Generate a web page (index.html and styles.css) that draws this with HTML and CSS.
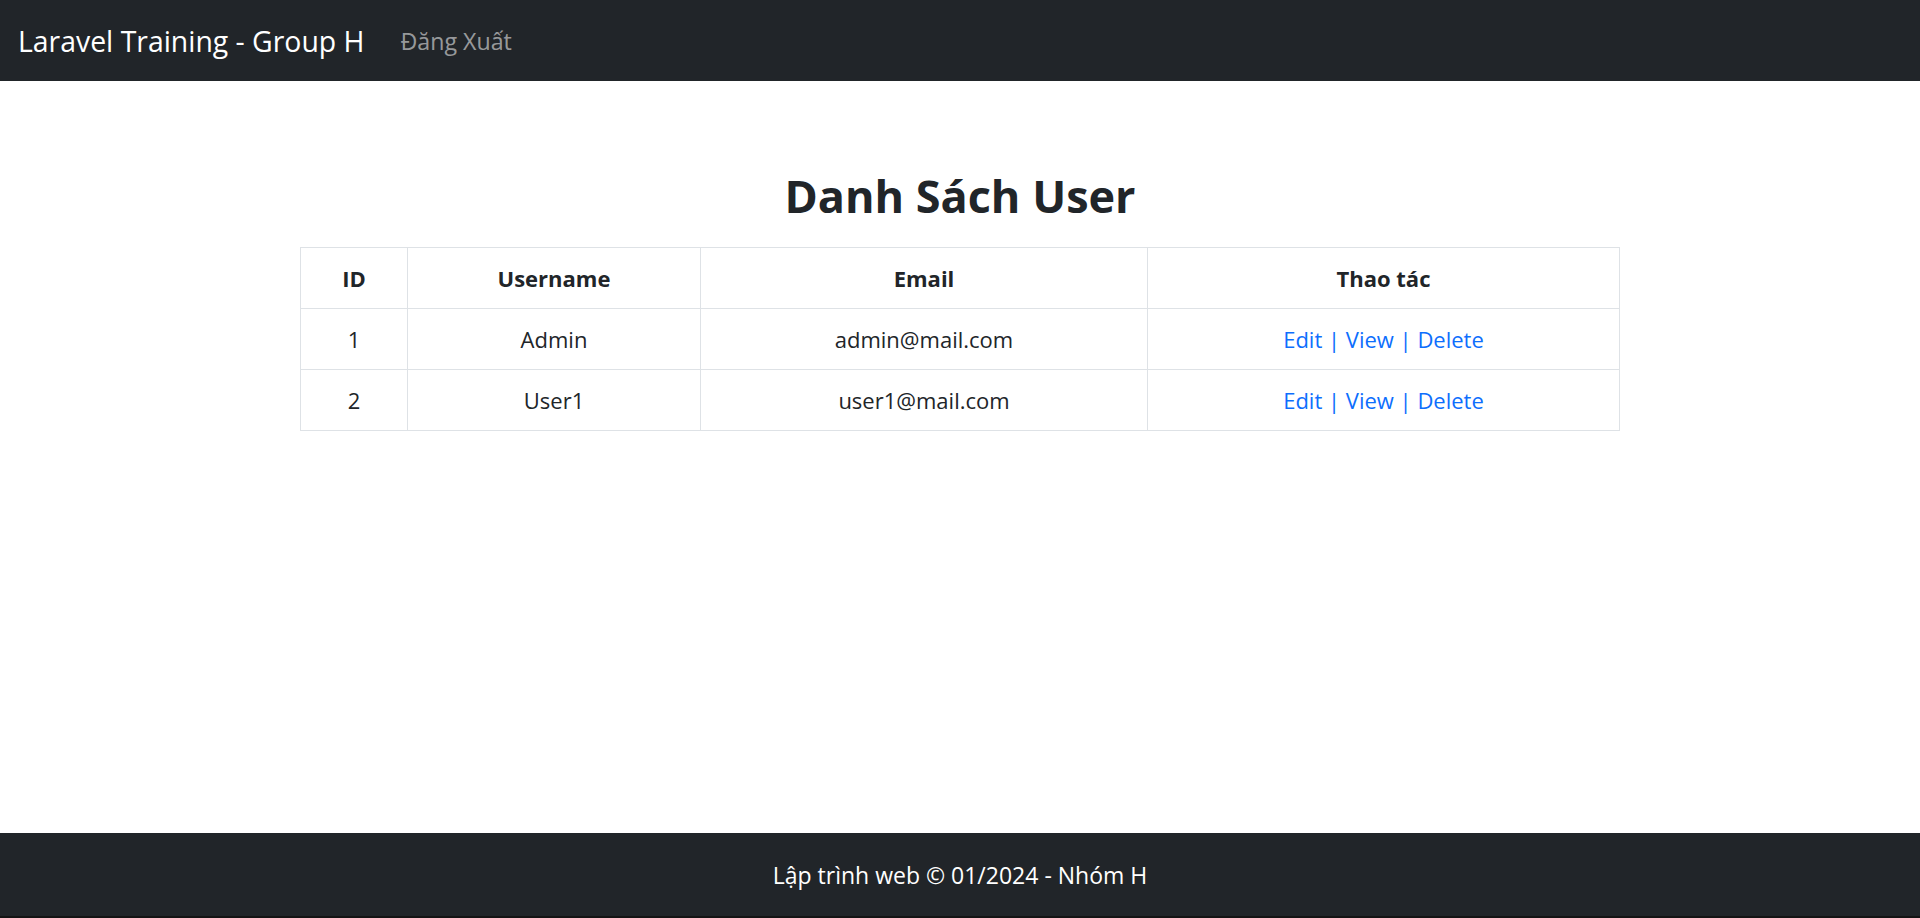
FILE: index.html
```html
<!DOCTYPE html>
<html lang="vi">
<head>
<meta charset="utf-8">
<title>Danh Sách User</title>
<link rel="stylesheet" href="styles.css">
</head>
<body>
<nav class="navbar">
  <a class="brand" href="#">Laravel Training - Group H</a>
  <a class="nav-link" href="#">Đăng Xuất</a>
</nav>
<main class="content">
  <h1 class="title">Danh Sách User</h1>
  <table class="users">
    <colgroup>
      <col class="c-id"><col class="c-user"><col class="c-mail"><col class="c-act">
    </colgroup>
    <thead>
      <tr><th>ID</th><th>Username</th><th>Email</th><th>Thao tác</th></tr>
    </thead>
    <tbody>
      <tr><td>1</td><td>Admin</td><td>admin@mail.com</td><td class="actions"><a href="#">Edit</a> | <a href="#">View</a> | <a href="#">Delete</a></td></tr>
      <tr><td>2</td><td>User1</td><td>user1@mail.com</td><td class="actions"><a href="#">Edit</a> | <a href="#">View</a> | <a href="#">Delete</a></td></tr>
    </tbody>
  </table>
</main>
<footer class="footer">Lập trình web © 01/2024 - Nhóm H</footer>
</body>
</html>
```
FILE: styles.css
```css
html, body {
  margin: 0;
  padding: 0;
}
body {
  font-family: "Open Sans", "Noto Sans", sans-serif;
  font-size: 22px;
  line-height: 1.5;
  color: #212529;
  background: #fff;
  min-height: 100vh;
  display: flex;
  flex-direction: column;
}
a { text-decoration: none; }

.navbar {
  height: 81px;
  flex: 0 0 81px;
  background: #212529;
  display: flex;
  align-items: center;
  padding-left: 18px;
  box-sizing: border-box;
}
.brand {
  color: #fff;
  font-size: 28.4px;
  line-height: normal;
  margin-right: 24px;
}
.nav-link {
  color: rgba(255,255,255,0.55);
  font-size: 23.2px;
  line-height: normal;
  padding: 0 12px;
}

.content {
  flex: 1;
  width: 1320px;
  margin: 0 auto;
  padding-top: 87px;
}
.title {
  margin: 0 0 24px;
  text-align: center;
  font-size: 45px;
  font-weight: 700;
  line-height: 55px;
}
.users {
  width: 100%;
  border-collapse: collapse;
  table-layout: fixed;
}
.c-id { width: 107px; }
.c-user { width: 293px; }
.c-mail { width: 447px; }
.users th, .users td {
  border: 1px solid #dee2e6;
  padding: 12px 12px;
  text-align: center;
  font-size: 22px;
  line-height: 36px;
}
.users th { font-weight: 700; }
.users .actions { color: #0d6efd; }
.users a { color: #0d6efd; }

.footer {
  height: 85px;
  flex: 0 0 85px;
  box-sizing: border-box;
  padding-top: 2px;
  border-bottom: 2px solid #141414;
  background: #212529;
  color: #fff;
  display: flex;
  align-items: center;
  justify-content: center;
  font-size: 23px;
}
```
